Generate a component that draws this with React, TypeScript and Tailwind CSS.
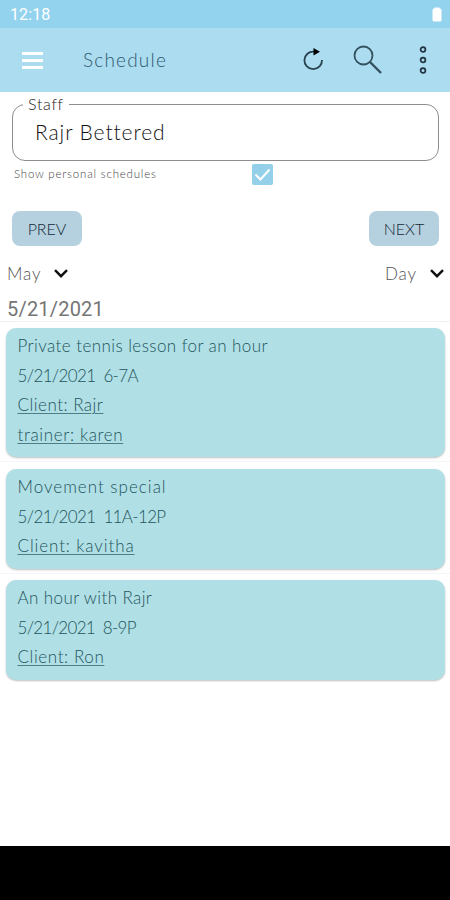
type Line = { text: string; spacing: string; link?: boolean };

const events: { id: number; height: string; lines: Line[] }[] = [
  {
    id: 1,
    height: "h-[129px]",
    lines: [
      { text: "Private tennis lesson for an hour", spacing: "tracking-[0.43px]" },
      { text: "5/21/2021  6-7A", spacing: "tracking-[-0.65px]" },
      { text: "Client: Rajr", spacing: "tracking-[0.5px]", link: true },
      { text: "trainer: karen", spacing: "tracking-[0.65px]", link: true },
    ],
  },
  {
    id: 2,
    height: "h-[100px]",
    lines: [
      { text: "Movement special", spacing: "tracking-[1px]" },
      { text: "5/21/2021  11A-12P", spacing: "tracking-[-0.65px]" },
      { text: "Client: kavitha", spacing: "tracking-[0.9px]", link: true },
    ],
  },
  {
    id: 3,
    height: "h-[100px]",
    lines: [
      { text: "An hour with Rajr", spacing: "tracking-[0.4px]" },
      { text: "5/21/2021  8-9P", spacing: "tracking-[-0.7px]" },
      { text: "Client: Ron", spacing: "tracking-[0.6px]", link: true },
    ],
  },
];

function Chevron() {
  return (
    <svg width="14" height="10" viewBox="0 0 14 10" fill="none" stroke="#111" strokeWidth="2.4">
      <path d="M1 1.2 7 7.2l6-6" />
    </svg>
  );
}

function StatusBar() {
  return (
    <div className="flex h-7 items-center justify-between bg-[#94d3ee] pt-0.5 pr-2 pl-2.5">
      <span className="font-[Roboto] text-base leading-none font-normal tracking-[0.1px] text-white">12:18</span>
      <svg width="10" height="16" viewBox="0 0 10 16" fill="#fff">
        <path d="M2.5 .5h5v1H8A1.5 1.5 0 0 1 9.5 3v10A1.5 1.5 0 0 1 8 14.500H2A1.5 1.5 0 0 1 .5 13V3A1.5 1.5 0 0 1 2 1.5h.5z" />
      </svg>
    </div>
  );
}

function AppBar() {
  return (
    <header className="flex h-16 items-center bg-[#abdcf0]">
      <div className="ml-[22px] flex w-[21px] flex-col gap-[4px]">
        <span className="h-[3px] bg-white" />
        <span className="h-[3px] bg-white" />
        <span className="h-[3px] bg-white" />
      </div>
      <h1 className="ml-10 text-[19px] tracking-[1.2px] text-[#2f5a6e]">Schedule</h1>
      <svg className="ml-auto" width="22" height="24" viewBox="0 0 22 24" fill="none" stroke="#27414f" strokeWidth="1.8">
        <path d="M12 3.6A8.8 8.8 0 1 0 20 12" />
        <path d="M11.5 0v7.4l6.5-3.7z" fill="#000" stroke="none" />
      </svg>
      <svg className="ml-[29px]" width="30" height="30" viewBox="0 0 30 30" fill="none" stroke="#34515f" strokeWidth="1.8">
        <circle cx="10.5" cy="10.5" r="9" />
        <path d="m17 17 11 11" strokeWidth="2.4" />
      </svg>
      <svg className="mr-[22px] ml-[35px]" width="10" height="30" viewBox="0 0 10 30" fill="none" stroke="#1f3340" strokeWidth="1.7">
        <circle cx="5" cy="4.5" r="2.4" />
        <circle cx="5" cy="15" r="2.4" />
        <circle cx="5" cy="25.5" r="2.4" />
      </svg>
    </header>
  );
}

export default function App() {
  return (
    <div className="flex h-[900px] w-[450px] flex-col overflow-hidden bg-white font-[Lato,sans-serif] font-light">
      <StatusBar />
      <AppBar />

      <section className="pr-[11px] pl-3">
        <fieldset className="mt-[3px] h-[66px] rounded-[13px] border border-[#8d8d8d] pl-[10px]">
          <legend className="px-[5px] text-[16px] leading-[18px] tracking-[0.7px] text-[#222]">Staff</legend>
          <div className="pt-[5px] pl-3 text-[21px] leading-[28px] tracking-[0.9px] text-[#111]">Rajr Bettered</div>
        </fieldset>
        <div className="mt-[2px] flex h-[22px] items-center">
          <span className="w-[240px] pl-0.5 text-[11.5px] tracking-[0.8px] text-[#444]">Show personal schedules</span>
          <svg width="21" height="21" viewBox="0 0 21 21" fill="none">
            <rect width="21" height="21" rx="2" fill="#94d0e9" />
            <path d="m3.5 10.5 5 5 9-10" stroke="#fff" strokeWidth="2" />
          </svg>
        </div>
        <div className="mt-[26px] flex justify-between text-base text-[#142a38]">
          <button className="h-[35px] w-[70px] rounded-lg bg-[#b5d0de]">PREV</button>
          <button className="h-[35px] w-[70px] rounded-lg bg-[#b5d0de]">NEXT</button>
        </div>
      </section>

      <div className="mt-[14px] flex h-[27px] items-center justify-between pr-[6px] pl-[7px] text-[17px] tracking-[0.9px] text-[#555]">
        <div className="flex items-center gap-[13px]">
          May <Chevron />
        </div>
        <div className="flex items-center gap-[13px]">
          Day <Chevron />
        </div>
      </div>

      <div className="h-[35px] border-b border-[#eef2f3] pt-[10px] pl-[7px] font-[Roboto] text-[20px] leading-6 font-normal tracking-[0.2px] text-[#757575]">
        5/21/2021
      </div>

      <ul>
        {events.map((e) => (
          <li key={e.id} className="border-b border-[#f4f7f7] px-[5.5px] pt-[7px] pb-[4px] first:pt-[6px] last:border-0 last:pt-[6.4px]">
            <article
              className={`${e.height} rounded-[10px] bg-[#b0dfe5] pt-[3px] pl-3 text-[17px] leading-[29.5px] text-[#24555c] shadow-[0_1px_2px_rgba(0,0,0,0.25)]`}
            >
              {e.lines.map((l) => (
                <p key={l.text} className={`whitespace-pre ${l.spacing}`}>
                  <span className={l.link ? "underline decoration-[#517d84] decoration-1 underline-offset-[2px]" : ""}>{l.text}</span>
                </p>
              ))}
            </article>
          </li>
        ))}
      </ul>

      <footer className="mt-auto h-[54px] bg-black" />
    </div>
  );
}
